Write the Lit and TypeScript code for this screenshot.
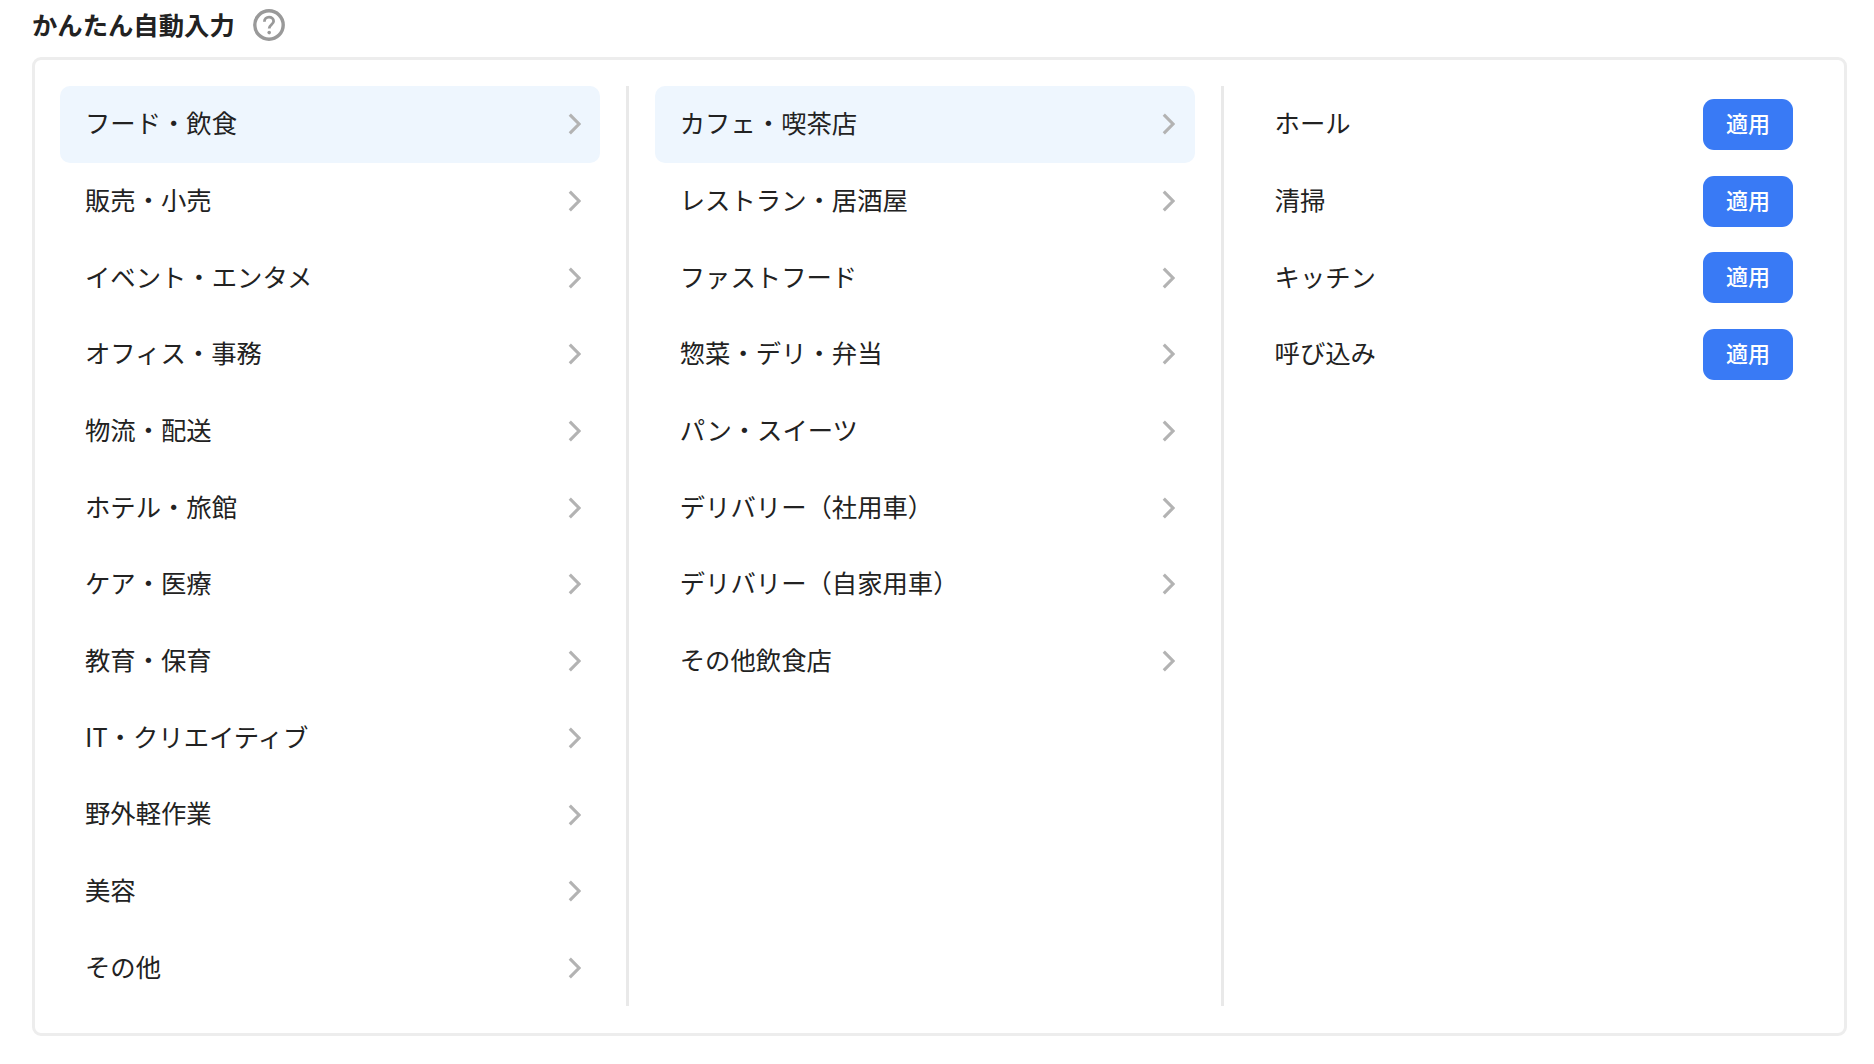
import { LitElement, html, css, svg } from "lit";
import { customElement } from "lit/decorators.js";

const col1 = ["フード・飲食","販売・小売","イベント・エンタメ","オフィス・事務","物流・配送","ホテル・旅館","ケア・医療","教育・保育","IT・クリエイティブ","野外軽作業","美容","その他"];
const col2 = ["カフェ・喫茶店","レストラン・居酒屋","ファストフード","惣菜・デリ・弁当","パン・スイーツ","デリバリー（社用車）","デリバリー（自家用車）","その他飲食店"];
const col3 = ["ホール","清掃","キッチン","呼び込み"];

const chevron = svg`<svg class="chev" viewBox="0 0 13 22" width="13" height="22"><path d="M1.8 1.6 L11 11 L1.8 20.4" fill="none" stroke="#b3b3b3" stroke-width="3.1"/></svg>`;

@customElement("app-root")
export class AppRoot extends LitElement {
  static styles = css`
    :host {
      display: block;
      box-sizing: border-box;
      width: 1874px;
      height: 1064px;
      padding-left: 32px;
      background: #fff;
      color: #222;
      font-family: "Noto Sans CJK JP", "Noto Sans", sans-serif;
      font-size: 25.35px;
    }
    .head {
      display: flex;
      align-items: center;
      gap: 18px;
      height: 50px;
      margin-bottom: 7px;
      font-weight: 700;
    }
    .head span { padding-bottom: 2px; }
    .help { display: block; }
    .card {
      box-sizing: border-box;
      width: 1815px;
      height: 979px;
      border: 3px solid #ededed;
      border-radius: 9px;
      padding: 26px 25px;
      display: flex;
    }
    .col { width: 540px; flex: none; }
    .sep { width: 3px; flex: none; background: #e9e9e9; margin: 0 25.6px 0 26.2px; height: 920px; }
    .col.last { flex: 1; width: auto; }
    .row {
      display: flex;
      align-items: center;
      justify-content: space-between;
      height: 76.7px;
      padding: 0 19.5px 0 25px;
      border-radius: 10px;
    }
    .row.on { background: #eef6fe; }
    .row.job { padding-right: 26px; }
    .label { line-height: 1; padding-bottom: 3px; }
    .chev { display: block; flex: none; }
    .btn {
      box-sizing: border-box;
      width: 90px;
      height: 51px;
      border: 0;
      border-radius: 11px;
      background: #397af5;
      color: #fff;
      font: 500 22px "Noto Sans CJK JP", "Noto Sans", sans-serif;
      padding: 0 0 5px;
    }
  `;

  private list(items: string[]) {
    return items.map(
      (t, i) => html`<div class="row ${i === 0 ? "on" : ""}"><span class="label">${t}</span>${chevron}</div>`
    );
  }

  render() {
    return html`
      <div class="head">
        <span>かんたん自動入力</span>
        <svg class="help" width="32" height="32" viewBox="0 0 32 32">
          <circle cx="16" cy="16" r="14.2" fill="none" stroke="#999" stroke-width="3.4"/>
          <path d="M11.4 12.8 C11.4 9.8 13.6 8.2 16 8.2 C18.6 8.2 20.6 9.8 20.6 12.2 C20.6 15.4 16.2 15.6 16.2 19.6" fill="none" stroke="#999" stroke-width="2.8"/>
          <circle cx="16.2" cy="23.6" r="1.8" fill="#999"/>
        </svg>
      </div>
      <div class="card">
        <div class="col">${this.list(col1)}</div>
        <div class="sep"></div>
        <div class="col">${this.list(col2)}</div>
        <div class="sep"></div>
        <div class="col last">
          ${col3.map((t) => html`<div class="row job"><span class="label">${t}</span><button class="btn">適用</button></div>`)}
        </div>
      </div>
    `;
  }
}
